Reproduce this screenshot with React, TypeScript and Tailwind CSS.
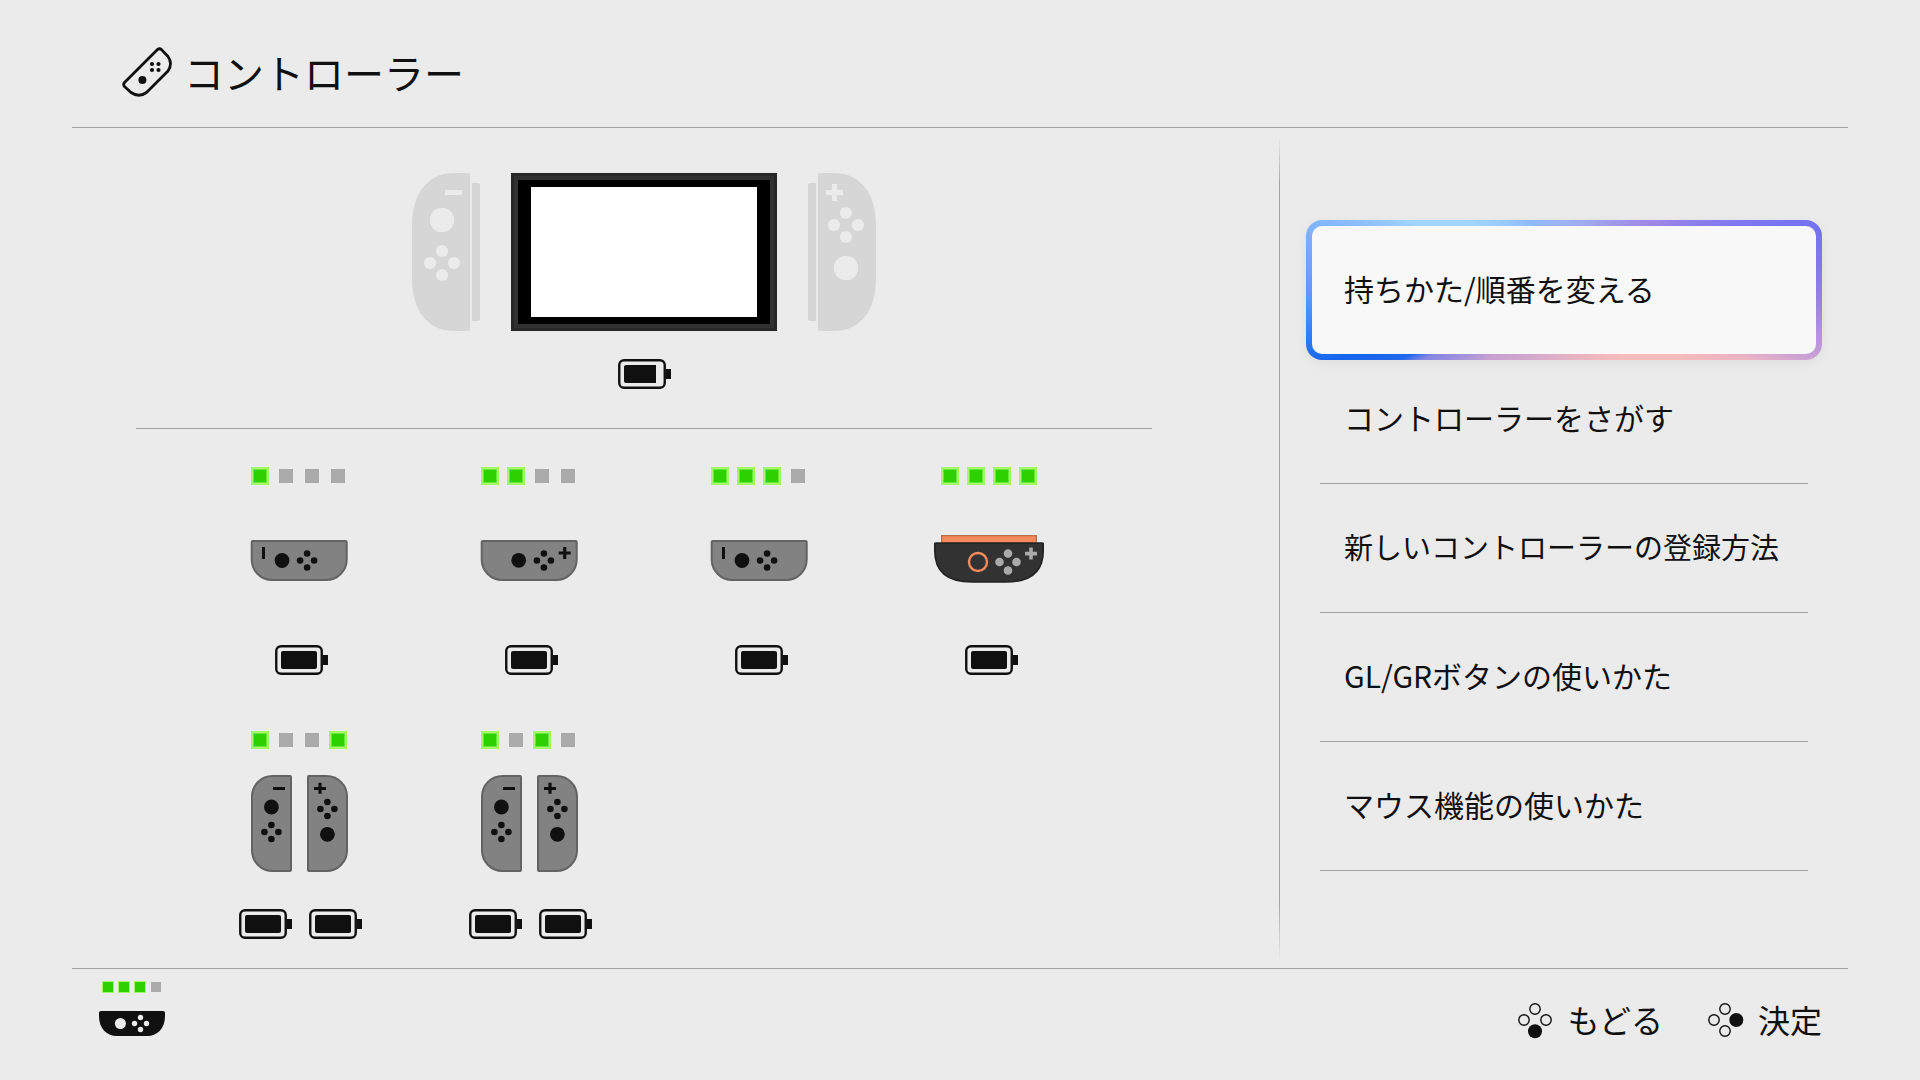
import React from 'react';

const INK = '#101010';

type Kind = 'left' | 'right' | 'right2' | 'pair';

interface Player {
  id: string;
  kind: Kind;
  leds: boolean[];
}

const PLAYERS: Player[] = [
  { id: 'p1', kind: 'left', leds: [true, false, false, false] },
  { id: 'p2', kind: 'right', leds: [true, true, false, false] },
  { id: 'p3', kind: 'left', leds: [true, true, true, false] },
  { id: 'p4', kind: 'right2', leds: [true, true, true, true] },
  { id: 'p5', kind: 'pair', leds: [true, false, false, true] },
  { id: 'p6', kind: 'pair', leds: [true, false, true, false] },
];

const MENU = [
  '持ちかた/順番を変える',
  'コントローラーをさがす',
  '新しいコントローラーの登録方法',
  'GL/GRボタンの使いかた',
  'マウス機能の使いかた',
];

// Four face buttons around a centre point
const Cross = ({ x, y, d, r, fill }: { x: number; y: number; d: number; r: number; fill: string }) => (
  <g fill={fill}>
    <circle cx={x} cy={y - d} r={r} />
    <circle cx={x + d} cy={y} r={r} />
    <circle cx={x} cy={y + d} r={r} />
    <circle cx={x - d} cy={y} r={r} />
  </g>
);

const Battery = ({ level = 36 }: { level?: number }) => (
  <svg width="53" height="30" viewBox="0 0 53 30" className="shrink-0">
    <rect x="1.25" y="1.25" width="45.5" height="27.5" rx="4.8" fill="none" stroke={INK} strokeWidth="2.4" />
    <path d={level < 36 ? `M8 6H${6 + level}V24H8a2 2 0 0 1-2-2V8a2 2 0 0 1 2-2Z` : 'M8 6H40a2 2 0 0 1 2 2V22a2 2 0 0 1-2 2H8a2 2 0 0 1-2-2V8a2 2 0 0 1 2-2Z'} fill={INK} />
    <rect x="48" y="10" width="5" height="10" fill={INK} />
  </svg>
);

const Leds = ({ leds }: { leds: boolean[] }) => (
  <div className="flex gap-2">
    {leds.map((on, i) =>
      on ? (
        <span key={i} className="size-[18px] border-2 border-[#a3f76a] bg-[#2dd000] ring-1 ring-inset ring-[#6be83a]" />
      ) : (
        <span key={i} className="m-[2px] size-[14px] bg-[#aaaaaa]" />
      )
    )}
  </div>
);

const JoyLeft = () => (
  <svg width="41" height="98" viewBox="0 -1 41 98">
    <path d="M21.5 1H39a1 1 0 0 1 1 1V95a1 1 0 0 1-1 1H21.5A20.5 20.5 0 0 1 1 75.5V21.5A20.5 20.5 0 0 1 21.5 1Z" fill="#828282" stroke="#636363" strokeWidth="2" />
    <rect x="22" y="12" width="12" height="3" fill={INK} />
    <circle cx="20.4" cy="32" r="7.4" fill={INK} />
    <Cross x={20.4} y={57} d={7} r={3.3} fill={INK} />
  </svg>
);

const JoyRight = () => (
  <svg width="41" height="98" viewBox="0 -1 41 98">
    <path d="M19.5 1H2a1 1 0 0 0-1 1V95a1 1 0 0 0 1 1H19.5A20.5 20.5 0 0 0 40 75.5V21.5A20.5 20.5 0 0 0 19.5 1Z" fill="#828282" stroke="#636363" strokeWidth="2" />
    <path d="M7 13.5H19M13 7.7V18.7" stroke={INK} strokeWidth="3.2" />
    <Cross x={20.4} y={34} d={7} r={3.3} fill={INK} />
    <circle cx="20.4" cy="59.3" r="7.4" fill={INK} />
  </svg>
);

const SIDEWAYS = 'M2 1H95a1 1 0 0 1 1 1V19.5A20.5 20.5 0 0 1 75.5 40H21.5A20.5 20.5 0 0 1 1 19.5V2a1 1 0 0 1 1-1Z';

const SideLeft = () => (
  <svg width="98" height="44" viewBox="-0.7 -3 98 44">
    <path d={SIDEWAYS} fill="#828282" stroke="#636363" strokeWidth="2" />
    <rect x="11.3" y="7" width="3" height="12" fill={INK} />
    <circle cx="31.3" cy="20.5" r="7.4" fill={INK} />
    <Cross x={56.4} y={20.5} d={7} r={3.3} fill={INK} />
  </svg>
);

const SideRight = () => (
  <svg width="98" height="44" viewBox="-0.7 -3 98 44">
    <path d={SIDEWAYS} fill="#828282" stroke="#636363" strokeWidth="2" />
    <circle cx="38" cy="20.3" r="7.4" fill={INK} />
    <Cross x={63.2} y={20.5} d={7} r={3.3} fill={INK} />
    <path d="M78 13H90M84 7V19" stroke={INK} strokeWidth="3.2" />
  </svg>
);

const SideRight2 = () => (
  <svg width="110" height="48" viewBox="0 0 110 48">
    <rect x="7.7" y="0.7" width="94.6" height="9" fill="#f88a5e" stroke="#b9704f" strokeWidth="1.4" />
    <path d="M1.5 8H108.5a.7.7 0 0 1 .7.7V16C109.2 36 97 47 72 47H38C13 47 .8 36 .8 16V8.7A.7.7 0 0 1 1.5 8Z" fill="#323232" stroke="#222222" strokeWidth="1.6" />
    <circle cx="44" cy="27" r="9" fill="none" stroke="#f88a5e" strokeWidth="2.4" />
    <Cross x={74} y={27} d={8.5} r={4.3} fill="#aaaaaa" />
    <path d="M91 18.6H103M97 12.6V24.6" stroke="#aaaaaa" strokeWidth="3.6" />
  </svg>
);

const Controller = ({ kind }: { kind: Kind }) => {
  if (kind === 'left') return <SideLeft />;
  if (kind === 'right') return <SideRight />;
  if (kind === 'right2') return <SideRight2 />;
  return (
    <div className="flex gap-[15px]">
      <JoyLeft />
      <JoyRight />
    </div>
  );
};

const PlayerSlot = ({ player }: { player: Player }) => (
  <li className="flex w-[230px] flex-col items-center">
    <Leds leds={player.leds} />
    <div className="mb-3 flex h-[148px] items-center">
      <Controller kind={player.kind} />
    </div>
    {player.kind === 'pair' ? (
      <div className="flex gap-[17px] pl-[3px]">
        <Battery />
        <Battery />
      </div>
    ) : (
      <div className="pl-[5px]">
        <Battery />
      </div>
    )}
  </li>
);

// Detached controllers on both sides of the console
const DockLeft = () => (
  <svg width="68" height="158" viewBox="0 0 68 158">
    <path d="M42 0H56a2 2 0 0 1 2 2V156a2 2 0 0 1-2 2H42C14 158 0 135 0 106V52C0 23 14 0 42 0Z" fill="#d6d6d6" />
    <path d="M60 10h6a2 2 0 0 1 2 2V146a2 2 0 0 1-2 2h-6Z" fill="#d6d6d6" />
    <rect x="33" y="17" width="17" height="5" fill="#ebebeb" />
    <circle cx="30" cy="47" r="12.2" fill="#ebebeb" />
    <Cross x={30} y={90} d={12} r={6.1} fill="#ebebeb" />
  </svg>
);

const DockRight = () => (
  <svg width="68" height="158" viewBox="0 0 68 158">
    <path d="M26 0H12a2 2 0 0 0-2 2V156a2 2 0 0 0 2 2H26C54 158 68 135 68 106V52C68 23 54 0 26 0Z" fill="#d6d6d6" />
    <path d="M8 10H2a2 2 0 0 0-2 2V146a2 2 0 0 0 2 2h6Z" fill="#d6d6d6" />
    <path d="M18 19.5H35M26.5 11V28" stroke="#ebebeb" strokeWidth="5" />
    <Cross x={38} y={52} d={12} r={6.1} fill="#ebebeb" />
    <circle cx="38" cy="95" r="12.2" fill="#ebebeb" />
  </svg>
);

const Screen = () => (
  <svg width="266" height="158" viewBox="0 0 266 158">
    <rect width="266" height="158" fill="#272727" />
    <rect x="3" y="3" width="260" height="152" fill="#313131" />
    <rect x="7" y="7" width="252" height="144" fill="#000000" />
    <rect x="20" y="14" width="226" height="130" fill="#ffffff" />
  </svg>
);

const TitleIcon = () => (
  <svg width="50" height="50" viewBox="0 0 50 50">
    <path d="M35.5 2.6Q37.5 .8 39.5 2.6L46 9.5Q51 16.5 46 24L24.5 45.5Q17 51 9 45.5L2.5 39.5Q.8 37.500 2.5 35.5Z" fill="none" stroke={INK} strokeWidth="2.8" strokeLinejoin="round" />
    <circle cx="20.4" cy="33" r="4" fill={INK} />
    <g fill={INK}>
      <circle cx="30" cy="17" r="2.1" />
      <circle cx="36.5" cy="17" r="2.1" />
      <circle cx="30" cy="23" r="2.1" />
      <circle cx="36.5" cy="23" r="2.1" />
    </g>
  </svg>
);

const ButtonHint = ({ active }: { active: 'bottom' | 'right' }) => (
  <svg width="36" height="36" viewBox="0 0 36 36">
    <g fill="none" stroke={INK} strokeWidth="1.4">
      <circle cx="17" cy="6" r="5.2" />
      <circle cx="6" cy="17" r="5.2" />
      {active === 'bottom' ? <circle cx="28" cy="17" r="5.2" /> : <circle cx="17" cy="28" r="5.2" />}
    </g>
    {active === 'bottom' ? <circle cx="17" cy="28.3" r="7" fill={INK} /> : <circle cx="28.3" cy="17" r="7" fill={INK} />}
  </svg>
);

const ActiveController = () => (
  <div className="flex flex-col items-center gap-[18px]">
    <div className="flex gap-1">
      {[true, true, true, false].map((on, i) =>
        on ? (
          <span key={i} className="size-3 border border-[#a3f76a] bg-[#2dd000]" />
        ) : (
          <span key={i} className="m-px size-[10px] bg-[#aaaaaa]" />
        )
      )}
    </div>
    <svg width="66" height="25" viewBox="0 0 66 25">
      <path d="M2 0H64a2 2 0 0 1 2 2V5C66 17 59 25 48 25H18C7 25 0 17 0 5V2A2 2 0 0 1 2 0Z" fill={INK} />
      <circle cx="21.4" cy="12.5" r="5.5" fill="#ebebeb" />
      <Cross x={41.5} y={12.5} d={6} r={2.7} fill="#ebebeb" />
    </svg>
  </div>
);

const Menu = () => (
  <ul>
    {MENU.map((label, i) =>
      i === 0 ? (
        <li key={label} className="-mx-[14px] -my-[5px]">
          <button
            type="button"
            className="flex w-full rounded-2xl bg-[conic-gradient(from_0deg_at_50%_50%,#9fb2f6_0deg,#a0a8ee_21deg,#a088e6_53deg,#7371f5_76deg,#8f7cec_90deg,#b692dc_100deg,#c8a0d6_105deg,#ebb2c4_110deg,#f8baba_120deg,#f8baba_140deg,#e0b0c6_185deg,#c8a0d2_228deg,#8586e2_244deg,#2268ea_247deg,#1465ec_253deg,#5c95f8_268deg,#84b8fd_286deg,#9fd5fe_294deg,#9fd5fe_306deg,#8fb9fb_335deg,#9fb2f6_360deg)] p-[6px] text-left shadow-[0_3px_12px_rgba(0,0,0,0.06)]"
          >
            <span className="flex h-32 w-full items-center rounded-[10px] bg-[#f8f8f8] px-8 pb-1">{label}</span>
          </button>
        </li>
      ) : (
        <li key={label} className="h-[129px] border-b border-[#a3a3a3]">
          <button
            type="button"
            className={`flex h-full w-full items-center px-6 pb-1 text-left ${label.length > 14 ? 'text-[29px]' : ''}`}
          >
            {label}
          </button>
        </li>
      )
    )}
  </ul>
);

export default function App() {
  return (
    <div className="flex min-h-screen flex-col bg-[#ebebeb] px-[72px] font-['Noto_Sans_CJK_JP',sans-serif] text-[#101010]">
      <header className="flex h-32 items-center gap-3 border-b border-[#a3a3a3] px-[50px] pt-4">
        <TitleIcon />
        <h1 className="text-[40px] leading-[56px]">コントローラー</h1>
      </header>

      <main className="grid flex-1 grid-cols-[1207fr_569fr]">
        <section className="flex flex-col items-center pt-[45px] pr-[127px] pl-16">
          <div className="flex items-center gap-[31px]">
            <DockLeft />
            <Screen />
            <DockRight />
          </div>
          <div className="mt-7">
            <Battery level={32} />
          </div>
          <hr className="mt-[39px] w-full border-[#a3a3a3]" />
          <ul className="mt-[38px] flex w-[920px] flex-wrap gap-y-14">
            {PLAYERS.map((player) => (
              <PlayerSlot key={player.id} player={player} />
            ))}
          </ul>
        </section>

        <div className="flex">
          <div className="my-2 w-px bg-[linear-gradient(to_bottom,transparent,#a3a3a3_6%,#a3a3a3_93%,transparent)]" />
          <nav className="flex-1 px-10 pt-[97px] text-[30px] leading-10">
            <Menu />
          </nav>
        </div>
      </main>

      <footer className="flex h-[112px] items-start justify-between border-t border-[#a3a3a3] pt-3 pr-[26px] pl-[27px]">
        <ActiveController />
        <div className="flex gap-[45px] pt-5 text-[32px] leading-[36px]">
          <button type="button" className="flex items-center gap-[14px]">
            <ButtonHint active="bottom" />
            <span className="pb-1">もどる</span>
          </button>
          <button type="button" className="flex items-center gap-[14px]">
            <ButtonHint active="right" />
            <span className="pb-1">決定</span>
          </button>
        </div>
      </footer>
    </div>
  );
}
